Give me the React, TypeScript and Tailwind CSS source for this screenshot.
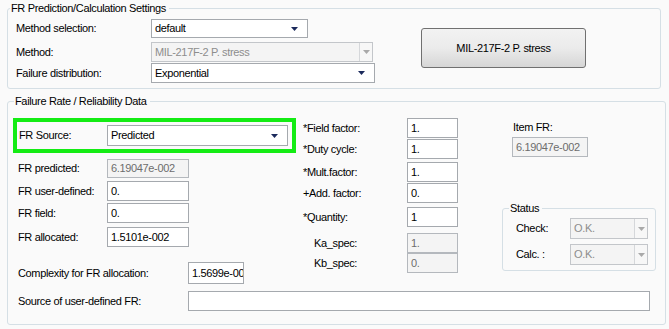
import React from "react";

const Arrow = ({ color = "#1b2a5c" }: { color?: string }) => (
  <svg width="7" height="4" viewBox="0 0 7 4" className="shrink-0">
    <path d="M0 0h7L3.5 4z" fill={color} />
  </svg>
);

const Field = ({
  value = "",
  disabled = false,
  className = "",
}: {
  value?: string;
  disabled?: boolean;
  className?: string;
}) => (
  <div
    className={`flex items-center overflow-hidden whitespace-nowrap border pl-[3px] ${
      disabled
        ? "border-[#b4b8bd] bg-[#f4f4f4] text-[#6d6d6d]"
        : "border-[#a5a9ae] bg-white text-black"
    } ${className}`}
  >
    {value}
  </div>
);

const Combo = ({ value, className = "" }: { value: string; className?: string }) => (
  <div
    className={`flex items-center justify-between border border-[#a5a9ae] bg-white pl-[3px] pr-[9px] ${className}`}
  >
    <span>{value}</span>
    <Arrow />
  </div>
);

const DisabledCombo = ({ value, className = "" }: { value: string; className?: string }) => (
  <div className={`flex items-stretch border border-[#c3c6ca] bg-[#f4f4f4] ${className}`}>
    <span className="flex flex-1 items-center overflow-hidden whitespace-nowrap pl-[3px] text-[#8d8d8d]">
      {value}
    </span>
    <span className="flex w-[13px] items-center justify-center border-l border-[#d5d7da] bg-[#f7f7f7]">
      <Arrow color="#a9a9a9" />
    </span>
  </div>
);

const Legend = ({ children, className = "" }: { children: React.ReactNode; className?: string }) => (
  <legend className={`pl-[1px] pr-[3px] leading-[14px] ${className}`}>{children}</legend>
);

const LeftRow = ({
  label,
  value,
  disabled = false,
  className = "",
}: {
  label: string;
  value: string;
  disabled?: boolean;
  className?: string;
}) => (
  <div className={`flex items-center pl-[5px] ${className}`}>
    <span className="w-[89px]">{label}</span>
    <Field value={value} disabled={disabled} className="h-full w-[82px]" />
  </div>
);

const MidRow = ({
  label,
  value,
  disabled = false,
  indent = false,
  className = "",
}: {
  label: string;
  value: string;
  disabled?: boolean;
  indent?: boolean;
  className?: string;
}) => (
  <div className={`flex h-[20px] items-center ${className}`}>
    <span className={`w-[104px] ${indent ? "pl-[11px]" : ""}`}>{label}</span>
    <Field value={value} disabled={disabled} className="h-full w-[51px]" />
  </div>
);

export default function App() {
  return (
    <div className="h-[329px] w-[669px] overflow-hidden bg-[#fafafa] pt-[1px] font-['Liberation_Sans',Arial,sans-serif] text-[11px] tracking-[-0.35px] text-black">
      <fieldset className="ml-[7px] w-[654px] rounded-[3px] border border-[#d5dfe5]">
        <Legend className="ml-[2px]">FR Prediction/Calculation Settings</Legend>
        <div className="flex items-start pb-[5px] pl-[8px] pt-[4px]">
          <div className="flex flex-col">
            <div className="flex h-[19px] items-center">
              <span className="w-[135px]">Method selection:</span>
              <Combo value="default" className="h-full w-[157px]" />
            </div>
            <div className="mt-[4px] flex h-[20px] items-center">
              <span className="w-[135px]">Method:</span>
              <DisabledCombo value="MIL-217F-2 P. stress" className="h-full w-[222px]" />
            </div>
            <div className="mt-[1px] flex h-[20px] items-center">
              <span className="w-[135px]">Failure distribution:</span>
              <Combo value="Exponential" className="h-full w-[224px]" />
            </div>
          </div>
          <button className="ml-[46px] mt-[9px] h-[40px] w-[165px] rounded-[3px] border border-[#707070] bg-gradient-to-b from-[#f2f2f2] via-[#ebebeb] to-[#d6d6d6] text-black">
            MIL-217F-2 P. stress
          </button>
        </div>
      </fieldset>

      <fieldset className="ml-[7px] mt-[5px] w-[659px] rounded-[3px] border border-[#d5dfe5]">
        <Legend className="ml-[6px]">Failure Rate / Reliability Data</Legend>
        <div className="pb-[13px] pl-[5px] pt-[10px]">
          <div className="flex items-start">
            <div className="flex w-[283px] flex-col">
              <div className="flex h-[35px] items-center border-[4px] border-[#14ec14] pl-[2px] pr-[4px]">
                <span className="w-[88px]">FR Source:</span>
                <Combo value="Predicted" className="h-[21px] w-[181px]" />
              </div>
              <LeftRow label="FR predicted:" value="6.19047e-002" disabled className="mt-[6px] h-[19px]" />
              <LeftRow label="FR user-defined:" value="0." className="mt-[3px] h-[20px]" />
              <LeftRow label="FR field:" value="0." className="mt-[2px] h-[20px]" />
              <LeftRow label="FR allocated:" value="1.5101e-002" className="mt-[4px] h-[20px]" />
              <div className="mt-[15px] flex h-[22px] items-center pl-[5px]">
                <span className="w-[170px]">Complexity for FR allocation:</span>
                <Field value="1.5699e-002" className="h-full w-[56px]" />
              </div>
            </div>

            <div className="ml-[7px] flex w-[155px] flex-col">
              <MidRow label="*Field factor:" value="1." />
              <MidRow label="*Duty cycle:" value="1." className="mt-[1px]" />
              <MidRow label="*Mult.factor:" value="1." className="mt-[3px]" />
              <MidRow label="+Add. factor:" value="0." className="mt-[1px]" />
              <MidRow label="*Quantity:" value="1" className="mt-[4px]" />
              <MidRow label="Ka_spec:" value="1." disabled indent className="mt-[6px]" />
              <MidRow label="Kb_spec:" value="0." disabled indent />
            </div>

            <div className="ml-[44px] flex w-[154px] flex-col">
              <span className="flex h-[19px] items-center pl-[11px]">Item FR:</span>
              <Field value="6.19047e-002" disabled className="ml-[10px] h-[20px] w-[76px]" />
              <fieldset className="mt-[44px] w-[154px] rounded-[3px] border border-[#d5dfe5]">
                <Legend className="ml-[6px]">Status</Legend>
                <div className="pb-[5px] pl-[13px] pt-[3px]">
                  <div className="flex h-[21px] items-center">
                    <span className="w-[54px]">Check:</span>
                    <DisabledCombo value="O.K." className="h-full w-[78px]" />
                  </div>
                  <div className="mt-[5px] flex h-[21px] items-center">
                    <span className="w-[54px]">Calc. :</span>
                    <DisabledCombo value="O.K." className="h-full w-[78px]" />
                  </div>
                </div>
              </fieldset>
            </div>
          </div>

          <div className="mt-[7px] flex h-[20px] items-center pl-[5px]">
            <span className="w-[170px]">Source of user-defined FR:</span>
            <Field className="h-full w-[462px]" />
          </div>
        </div>
      </fieldset>
    </div>
  );
}
